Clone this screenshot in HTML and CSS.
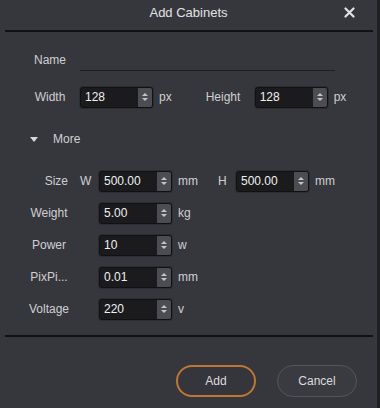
FILE: index.html
```html
<!DOCTYPE html>
<html lang="en">
<head>
  <meta charset="UTF-8">
  <title>Add Cabinets</title>
  <link rel="stylesheet" href="styles.css">
</head>
<body>
  <div class="dialog">
    <div class="titlebar">
      <span class="title">Add Cabinets</span>
      <svg class="close" width="11" height="11" viewBox="0 0 11 11">
        <path d="M1.5 1.5 L9.5 9.5 M9.5 1.5 L1.5 9.5" stroke="#e2e2e4" stroke-width="2.2" stroke-linecap="round"/>
      </svg>
    </div>
    <div class="sep"></div>

    <div class="row row-name">
      <span class="lbl">Name</span>
      <div class="line-input"></div>
    </div>

    <div class="row row-size1">
      <span class="lbl">Width</span>
      <div class="spin"><span class="val">128</span><span class="step"></span></div>
      <span class="unit">px</span>
      <span class="lbl-h">Height</span>
      <div class="spin"><span class="val">128</span><span class="step"></span></div>
      <span class="unit">px</span>
    </div>

    <div class="row row-more">
      <span class="tri"></span>
      <span class="more">More</span>
    </div>

    <div class="row row-first">
      <span class="lbl2 lbl-size">Size</span>
      <span class="axis">W</span>
      <div class="spin"><span class="val">500.00</span><span class="step"></span></div>
      <span class="unit">mm</span>
      <span class="axis axis-h">H</span>
      <div class="spin"><span class="val">500.00</span><span class="step"></span></div>
      <span class="unit">mm</span>
    </div>

    <div class="row row2">
      <span class="lbl2">Weight</span>
      <div class="spin spin-gap"><span class="val">5.00</span><span class="step"></span></div>
      <span class="unit">kg</span>
    </div>

    <div class="row row2">
      <span class="lbl2">Power</span>
      <div class="spin spin-gap"><span class="val">10</span><span class="step"></span></div>
      <span class="unit">w</span>
    </div>

    <div class="row row2">
      <span class="lbl2">PixPi...</span>
      <div class="spin spin-gap"><span class="val">0.01</span><span class="step"></span></div>
      <span class="unit">mm</span>
    </div>

    <div class="row row2">
      <span class="lbl2">Voltage</span>
      <div class="spin spin-gap"><span class="val">220</span><span class="step"></span></div>
      <span class="unit">v</span>
    </div>

    <div class="sep sep-bottom"></div>

    <div class="buttons">
      <button class="btn btn-add">Add</button>
      <button class="btn btn-cancel">Cancel</button>
    </div>
  </div>
</body>
</html>
```

FILE: styles.css
```css
body {
  margin: 0;
  background: #1e1f23;
  font-family: 'Liberation Sans', Arial, sans-serif;
  font-size: 12px;
  color: #cfcfd2;
}

.dialog {
  width: 377px;
  height: 408px;
  background: #36373c;
  overflow: hidden;
}

.titlebar {
  height: 30px;
  display: flex;
  align-items: center;
  justify-content: center;
  position: relative;
}

.title {
  font-size: 13px;
  color: #e2e2e4;
  margin-top: -5px;
}

.close {
  position: absolute;
  left: 344px;
  top: 7px;
}

.sep {
  height: 2px;
  background: #111113;
  margin: 0 4px 0 5px;
}

.sep-bottom {
  margin-top: 15px;
}

.row {
  display: flex;
  align-items: center;
  height: 22px;
}

.row-name {
  margin-top: 17px;
  padding-left: 20px;
}

.lbl {
  width: 60px;
  text-align: center;
}

.line-input {
  width: 255px;
  height: 22px;
  border-bottom: 1px solid #1c1d21;
  box-sizing: border-box;
  align-self: flex-end;
}

.row-size1 {
  margin-top: 15px;
  padding-left: 20px;
}

.spin {
  width: 73px;
  height: 21px;
  box-sizing: border-box;
  background: #1b1b1e;
  border: 1px solid #111113;
  border-radius: 3px;
  display: flex;
  align-items: center;
  justify-content: space-between;
  box-shadow: 0 0 0 1px #2c2d31;
}

.val {
  color: #f0f0f0;
  padding-left: 4px;
  font-size: 12px;
}

.step {
  width: 14px;
  height: 19px;
  background: #4c4d52;
  border-radius: 0 2px 2px 0;
  position: relative;
}

.step::before,
.step::after {
  content: "";
  position: absolute;
  left: 4px;
  border-left: 3px solid transparent;
  border-right: 3px solid transparent;
}

.step::before {
  top: 5px;
  border-bottom: 3px solid #c4c4c8;
}

.step::after {
  top: 10px;
  border-top: 3px solid #c4c4c8;
}

.unit {
  margin-left: 6px;
}

.lbl-h {
  margin-left: 34px;
  width: 49px;
}

.row-more {
  margin-top: 20px;
  padding-left: 30px;
}

.tri {
  width: 0;
  height: 0;
  border-left: 4px solid transparent;
  border-right: 4px solid transparent;
  border-top: 5px solid #d8d8da;
}

.more {
  margin-left: 15px;
  color: #d0d0d3;
}

.row-first {
  margin-top: 20px;
  padding-left: 19px;
}

.row2 {
  margin-top: 10px;
  padding-left: 19px;
}

.lbl2 {
  width: 60px;
  text-align: center;
}

.lbl-size {
  text-align: right;
  padding-right: 11px;
  box-sizing: border-box;
}

.axis {
  width: 20px;
  padding-left: 1px;
  box-sizing: border-box;
}

.axis-h {
  margin-left: 19px;
  width: 19px;
}

.spin-gap {
  margin-left: 20px;
}

.buttons {
  display: flex;
  justify-content: flex-end;
  gap: 21px;
  padding-right: 20px;
  margin-top: 28px;
}

.btn {
  width: 80px;
  height: 32px;
  border-radius: 16px;
  background: #35363b;
  color: #dcdcde;
  font-family: 'Liberation Sans', Arial, sans-serif;
  font-size: 12px;
  cursor: pointer;
}

.btn-add {
  border: 2px solid #c07634;
}

.btn-cancel {
  border: 1px solid #55565b;
  background: #3a3b40;
}
```
